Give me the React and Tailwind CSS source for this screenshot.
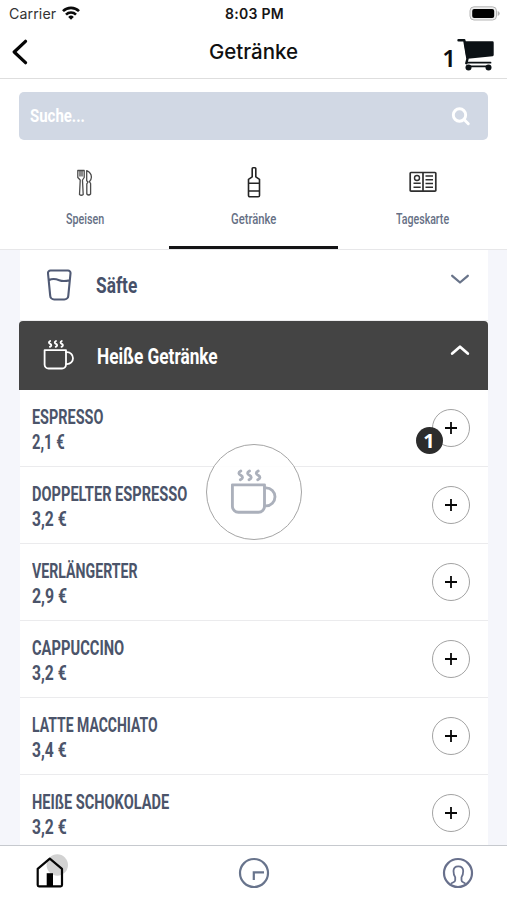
import { useLayoutEffect, useRef, useState } from 'react';

const items = [
  { name: 'ESPRESSO', price: '2,1 €', w: 71, pw: 32.5, count: 1 },
  { name: 'DOPPELTER ESPRESSO', price: '3,2 €', w: 155, pw: 34.5 },
  { name: 'VERLÄNGERTER', price: '2,9 €', w: 106, pw: 35 },
  { name: 'CAPPUCCINO', price: '3,2 €', w: 92, pw: 34.5 },
  { name: 'LATTE MACCHIATO', price: '3,4 €', w: 125.5, pw: 34.5 },
  { name: 'HEIßE SCHOKOLADE', price: '3,2 €', w: 137.5, pw: 34.5 },
];

// Condensed label: squeezes its text horizontally to the given width.
function Narrow({ width, className = '', children }) {
  const ref = useRef(null);
  const [scale, setScale] = useState(0.75);
  useLayoutEffect(() => {
    setScale(width / ref.current.offsetWidth);
  }, [width]);
  return (
    <span className={`block whitespace-nowrap font-[Roboto,sans-serif] ${className}`} style={{ width }}>
      <span ref={ref} className="inline-block origin-left" style={{ transform: `scaleX(${scale})` }}>
        {children}
      </span>
    </span>
  );
}

function Cup({ className, strokeWidth = 2 }) {
  return (
    <svg viewBox="0 0 32 32" className={className} fill="none" stroke="currentColor" strokeWidth={strokeWidth} strokeLinejoin="round" strokeLinecap="round">
      <path d="M1.6 11.2H23v14.3a4 4 0 0 1-4 4H5.6a4 4 0 0 1-4-4z" />
      <path d="M23 13.2h1a6 6 0 0 1 0 12h-1" />
      <path d="M7.2 2c-1.8 1-1.6 2 0 2.900s1.500 2-.3 3M13 2c-1.800 1-1.600 2 0 2.900s1.500 2-.3 3M18.800 2c-1.800 1-1.600 2 0 2.900s1.500 2-.3 3" />
    </svg>
  );
}

function StatusBar() {
  return (
    <div className="grid h-[27px] grid-cols-3 items-center pl-[9px] pr-[7px] text-[#161616]">
      <div className="flex items-center gap-[6px]">
        <span className="text-[14.2px] tracking-[0.1px] text-[#333]">Carrier</span>
        <svg viewBox="0 0 18 14" className="-mt-[1px] h-[14px] w-[18px]" fill="none" stroke="#0a0a0a" strokeWidth="2.6">
          <path d="M1 5.2a11.3 11.3 0 0 1 16 0" />
          <path d="M4 8.6a7 7 0 0 1 10 0" />
          <path d="M9 13.7 6.2 10.9a4 4 0 0 1 5.6 0z" fill="#0a0a0a" stroke="none" />
        </svg>
      </div>
      <div className="whitespace-nowrap text-center text-[14px] font-semibold tracking-[0.3px]">8:03 PM</div>
      <div className="flex items-center justify-end">
        <svg viewBox="0 0 31 15" className="h-[15px] w-[31px]">
          <rect x="1" y=".8" width="26.5" height="13.2" rx="4" fill="#eee" stroke="#b5b5b5" />
          <rect x="3.2" y="2.9" width="22" height="9" rx="2" fill="#000" />
          <path d="M28.7 5v5q2-.8 2-2.5T28.7 5" fill="#b5b5b5" />
        </svg>
      </div>
    </div>
  );
}

function Header() {
  return (
    <div className="flex h-[52px] items-center border-b border-[#dedede] pl-[12px] pr-[12px]">
      <div className="flex-1">
        <svg viewBox="0 0 16 26" className="-mt-[2px] h-[26px] w-[16px]" fill="none" stroke="#050505" strokeWidth="3.2" strokeLinecap="round" strokeLinejoin="round">
          <path d="M13.5 2.3 2.2 13l11.3 10.7" />
        </svg>
      </div>
      <h1 className="text-[20.5px] font-medium text-[#101010]">Getränke</h1>
      <div className="flex flex-1 items-center justify-end gap-[1px]">
        <span className="mt-[10px] font-['Noto_Sans',sans-serif] text-[24px] font-semibold leading-[28px] text-[#0c0f12]">1</span>
        <svg viewBox="0 0 38 34" className="mt-[4px] h-[34px] w-[38px]" fill="none" stroke="#0b1115" strokeWidth="2.4" strokeLinecap="round" strokeLinejoin="round">
          <path d="M1.5 2.3h5.8l3.2 18.5-1.2 4.4" />
          <path d="M8.2 4.5h27.3v12.5L10.5 19.5z" fill="#0b1115" />
          <path d="M10 24.7h23.5M11.5 28.3h21" strokeWidth="1.8" />
          <circle cx="11.5" cy="29.5" r="3" fill="#0b1115" stroke="none" />
          <circle cx="31.5" cy="29.5" r="3" fill="#0b1115" stroke="none" />
        </svg>
      </div>
    </div>
  );
}

function Tab({ label, width, active, children }) {
  return (
    <div className={`flex flex-1 flex-col items-center border-b-[3px] ${active ? 'border-[#141416]' : 'border-transparent'}`}>
      <div className="mt-[26px] flex h-[34px] items-center justify-center">{children}</div>
      <Narrow width={width} className="mt-[9px] text-[15px] font-medium leading-[20px] text-[#667085]">{label}</Narrow>
    </div>
  );
}

function Item({ name, price, w, pw, count }) {
  return (
    <div className="flex h-[77px] shrink-0 items-center justify-between border-b border-[#ebebed] pl-[12px] pr-[17.5px]">
      <div className="mt-[5px] text-[19.5px] font-bold leading-[25.5px] text-[#4b546a]">
        <Narrow width={w}>{name}</Narrow>
        <Narrow width={pw}>{price}</Narrow>
      </div>
      <div className="relative flex size-[38px] items-center justify-center rounded-full border border-[#a3a3a3]">
        <svg viewBox="0 0 12 12" className="size-[12px]" stroke="#080808" strokeWidth="1.8">
          <path d="M6 0v12M0 6h12" />
        </svg>
        {count && (
          <span className="absolute -left-[17.5px] top-[17.5px] flex size-[27px] items-center justify-center rounded-full bg-[#2c2c2c] font-['Noto_Sans',sans-serif] text-[20px] font-bold text-white">
            {count}
          </span>
        )}
      </div>
    </div>
  );
}

function BottomBar() {
  return (
    <div className="flex h-[55px] shrink-0 items-start justify-between border-t border-[#c6c9ce] bg-white pl-[34px] pr-[33px] pt-[8px]">
      <svg viewBox="0 0 36 36" className="size-[36px]" fill="none">
        <circle cx="23.3" cy="11" r="10.7" fill="#d2d2d2" />
        <path d="M3.7 31V14.8L15.8 4.6l12.2 10.2V31a1.3 1.3 0 0 1-1.3 1.3H5A1.3 1.3 0 0 1 3.7 31z" stroke="#050505" strokeWidth="2.2" strokeLinejoin="round" />
        <path d="M12.7 19.2H19V32h-6.3z" fill="#000" />
      </svg>
      <svg viewBox="0 0 32 32" className="-ml-[4px] mt-[3px] size-[32px]" fill="none" stroke="#68748c" strokeWidth="2.2">
        <circle cx="16" cy="16" r="14" />
        <path d="M26 15.3H15.8V23" />
      </svg>
      <svg viewBox="0 0 32 32" className="mt-[3px] size-[32px]" fill="none" stroke="#68708c" strokeWidth="2.2">
        <circle cx="16" cy="16" r="14" />
        <path d="M9 26.8c1-1.5 4.2-1.3 4.2-3.5v-3c-1.5-1.9-1.7-4-1.7-6.3 0-3.2 1.5-4.7 4.8-4.7s4.9 1.5 4.9 4.7c0 2.3-.2 4.4-1.7 6.3v3c0 2.2 2.9 2 3.9 3.5" strokeWidth="1.8" />
      </svg>
    </div>
  );
}

export default function App() {
  return (
    <div className="flex h-[900px] w-[507px] flex-col overflow-hidden bg-white font-[Inter,sans-serif]">
      <StatusBar />
      <Header />
      <div className="h-[170.5px] shrink-0 border-b border-[#e7e7e9]">
        <div className="mx-[19px] mt-[12.5px] flex h-[48.5px] items-center justify-between rounded-[5px] bg-[#d1d8e4] pl-[10.5px] pr-[17px]">
          <Narrow width={55} className="mt-[3px] text-[18.5px] font-bold text-white">Suche...</Narrow>
          <svg viewBox="0 0 20 20" className="mt-[2px] size-[20px]" fill="none" stroke="#fff" strokeWidth="2.9" strokeLinecap="round">
            <circle cx="8.5" cy="8" r="6.2" />
            <path d="m13.3 12.8 4 4" />
          </svg>
        </div>
        <div className="flex h-[109px]">
          <Tab label="Speisen" width={38}>
            <svg viewBox="0 0 16 28" className="h-[28px] w-[16px]" fill="none" stroke="#4b4b4b" strokeWidth="1.3" strokeLinejoin="round">
              <path d="M.8 1.500h6.400v7L5.500 11v.8l.7 13.700q-1.900 1.600-3.700 0l.7-13.700V11L.8 8.500zM3 2v5.500M5 2v5.500" />
              <path d="M9.700 1.700c3.300 1.500 4.700 4 4.700 6.500 0 2-1 3.300-2 4.500l1.200 1.800V25q-1.900 2-3.800 0V14.800L11 13l-1.300-1.200z" />
            </svg>
          </Tab>
          <Tab label="Getränke" width={45} active>
            <svg viewBox="0 0 16 32" className="ml-[1px] -mt-[2px] h-[32px] w-[16px]" fill="none" stroke="#242424" strokeWidth="1.6" strokeLinejoin="round">
              <path d="M6.2 2.500a.8.8 0 0 1 .8-.8h2a.8.8 0 0 1 .8.8v8.300l3.700 2.500V29.500a1.300 1.300 0 0 1-1.300 1.300H3.800a1.300 1.300 0 0 1-1.300-1.300V13.300l3.700-2.500zM2.500 17.200h11M2.500 25h11" />
            </svg>
          </Tab>
          <Tab label="Tageskarte" width={53}>
            <svg viewBox="0 0 28 22" className="-mt-[2px] h-[22px] w-[28px]" fill="none" stroke="#2f2f2f" strokeWidth="1.4" strokeLinejoin="round">
              <path d="M2 1.500h24a.8.8 0 0 1 .8.800v17a.8.8 0 0 1-.8.800H2a.8.8 0 0 1-.8-.800v-17A.8.8 0 0 1 2 1.500zM14 1.500v18.600" strokeWidth="1.7" />
              <circle cx="8" cy="7" r="2.5" />
              <path d="M4.500 12.300h7.200M4.500 16.300h7.200M16.500 5h7.500M16.500 8.700h7.500M16.500 12.500h7.500M16.500 16.300h7.500" />
            </svg>
          </Tab>
        </div>
      </div>
      <div className="relative min-h-0 flex-1 overflow-hidden bg-[#f5f6fb] px-[19.5px]">
        <div className="bg-white">
          <div className="flex h-[71.5px] items-center border-b border-[#ededef] pl-[27px] pr-[18px]">
            <svg viewBox="0 0 26 32" className="h-[32px] w-[26px]" fill="none" stroke="#505a75" strokeWidth="2.1" strokeLinejoin="round">
              <path d="M3.500 1.500h17.500a2.500 2.500 0 0 1 2.500 2.800l-2.200 22.300a4 4 0 0 1-4 3.900H7.200a4 4 0 0 1-4-3.900L1 4.300a2.500 2.500 0 0 1 2.500-2.800zM1.800 11.200c3.500-1.800 7-1.300 10.400 0s7 .9 10.500 0" />
            </svg>
            <Narrow width={41} className="ml-[23.5px] mt-[2px] text-[21.5px] font-bold text-[#465069]">Säfte</Narrow>
            <svg viewBox="0 0 20 12" className="mb-[12px] ml-auto h-[12px] w-[20px]" fill="none" stroke="#69748a" strokeWidth="2.3" strokeLinecap="round" strokeLinejoin="round">
              <path d="M2.200 2.800 10 9.500l7.800-6.700" />
            </svg>
          </div>
          <div className="-mx-[0.5px] flex h-[68.5px] items-center rounded-t-[4px] bg-[#444] pl-[24px] pr-[18px]">
            <Cup className="size-[32px] text-white" strokeWidth={1.8} />
            <Narrow width={121} className="ml-[21.5px] mt-[3px] text-[21.5px] font-bold text-white">Heiße Getränke</Narrow>
            <svg viewBox="0 0 20 12" className="mb-[10px] ml-auto h-[12px] w-[20px]" fill="none" stroke="#fff" strokeWidth="2.8" strokeLinecap="round" strokeLinejoin="round">
              <path d="M2.200 9.500 10 2.800l7.800 6.700" />
            </svg>
          </div>
          {items.map((item) => (
            <Item key={item.name} {...item} />
          ))}
        </div>
        <div className="absolute left-[206px] top-[194.5px] flex size-[96px] items-center justify-center rounded-full border border-[#a5a5a5] bg-white/90">
          <Cup className="size-[48px] text-[#abb0bb]" strokeWidth={1.9} />
        </div>
      </div>
      <BottomBar />
    </div>
  );
}
